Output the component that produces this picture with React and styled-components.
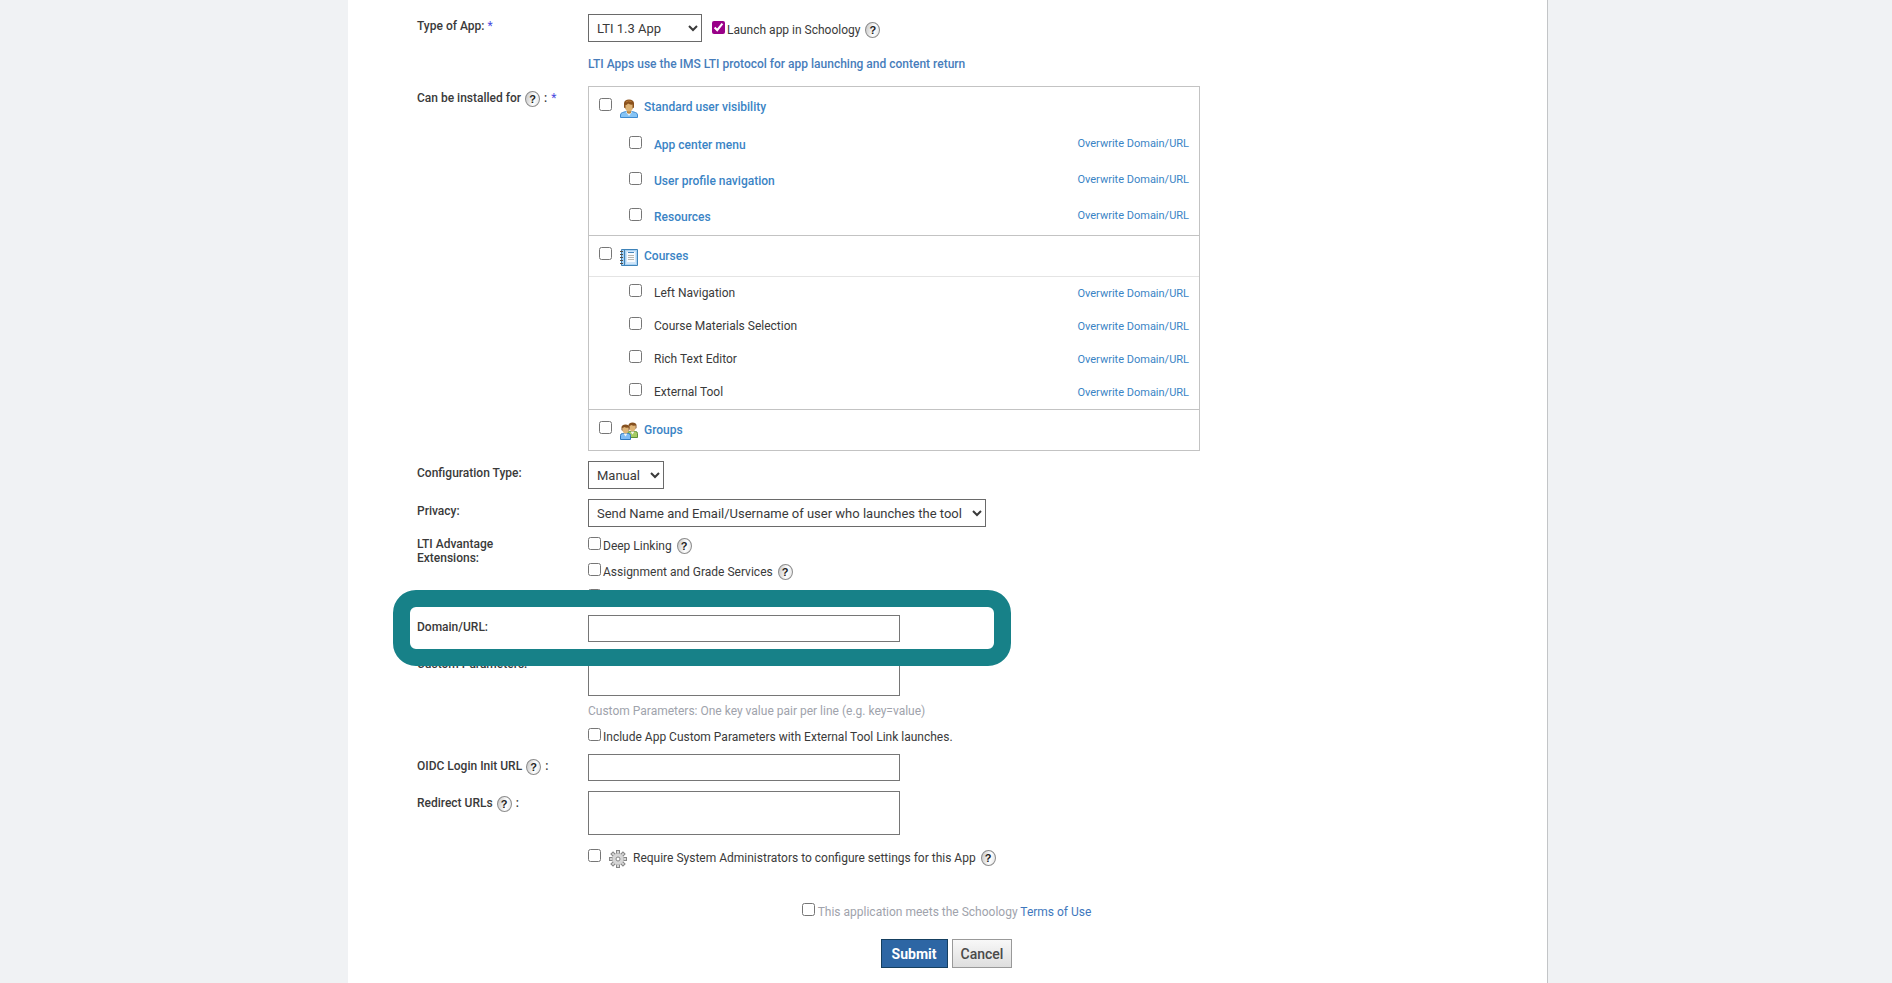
import React from "react";
import styled, { createGlobalStyle } from "styled-components";

const GlobalStyle = createGlobalStyle`
  * { box-sizing: border-box; }
  body {
    margin: 0;
    background: #f0f2f4;
    color: #3a3a3a;
    font: 12px/14px Roboto, "Liberation Sans", sans-serif;
  }
  input, select, textarea, button { font-family: inherit; color: inherit; }
`;

const Page = styled.div`
  display: flex;
  justify-content: center;
  padding-left: 4px;
  min-height: 100vh;
`;

const Main = styled.main`
  flex: 0 1 1200px;
  background: #fff;
  border-right: 1px solid #c3c5c7;
  padding: 14px 0 15px;
`;

const FormRows = styled.div`
  display: grid;
  gap: 10px;
  padding-left: 69px;
`;

const Row = styled.div`
  display: grid;
  grid-template-columns: 171px minmax(0, 1fr);
  align-items: start;
  position: relative;
`;

const RequireRow = styled(Row)`
  padding-top: 4px;
`;

const Label = styled.label`
  font-weight: 500;
  padding: ${(p) => (p.$top ? "0" : "5px")} 60px 0 0;
`;

const HelpLabel = styled.div`
  display: flex;
  align-items: center;
  gap: 4px;
  height: 24px;
  font-weight: 500;
`;

const Required = styled.span`
  color: #4b4be0;
  font-weight: 400;
`;

const Field = styled.div`
  min-width: 0;
`;

const Line = styled.div`
  display: flex;
  align-items: flex-start;
  height: ${(p) => p.$height || 26}px;
`;

const Launch = styled.div`
  display: flex;
  padding: 7px 0 0 10px;
`;

const Check = styled.input.attrs({ type: "checkbox" })`
  width: 13px;
  height: 13px;
  margin: 0;
  flex: none;
  accent-color: #908;
`;

const CheckLabel = styled.label`
  line-height: 18px;
  padding-left: 2px;
`;

const HelpButton = styled.button`
  width: 15px;
  height: 16px;
  flex: none;
  padding: 0;
  margin: 1px 0 0 ${(p) => p.$gap || 0}px;
  border: 1px solid #8c8c8c;
  border-radius: 50%;
  background: linear-gradient(100deg, #c8c8c8, #fff 60%, #e4e4e4);
  color: #222;
  font: bold 11px/14px "Liberation Sans", sans-serif;
  text-align: center;
`;

const Select = styled.select`
  width: ${(p) => p.$width}px;
  height: 28px;
  padding: 0 4px;
  border: 1px solid #6a6a6a;
  border-radius: 0;
  background: #fff;
  font-size: 13px;
`;

const TextBox = styled.input.attrs({ type: "text" })`
  width: 312px;
  height: 27px;
  border: 1px solid #767676;
  padding: 4px;
`;

const TextArea = styled.textarea`
  display: block;
  width: 312px;
  height: 44px;
  border: 1px solid #767676;
  padding: 4px;
  resize: none;
`;

const Note = styled.p`
  margin: 15px 0 5px;
  color: #477dbb;
  font-weight: 500;
`;

const Hint = styled.p`
  margin: 8px 0 10px;
  color: #a0a3ac;
`;

const Scope = styled.div`
  width: 612px;
  border: 1px solid #c3c3c3;
`;

const ScopeGroup = styled.section`
  border-top: ${(p) => (p.$first ? "0" : "1px solid #c3c3c3")};
`;

const ScopeHead = styled.div`
  display: flex;
  height: ${(p) => (p.$lined ? 41 : 40)}px;
  padding: 11px 0 0 10px;
  border-bottom: ${(p) => (p.$lined ? "1px solid #e4e4e4" : "0")};
  svg { margin: 1px 6px 0 8px; flex: none; }
  label { color: #3a84c5; font-weight: 500; line-height: 18px; }
`;

const ScopeList = styled.ul`
  list-style: none;
  margin: 0;
  padding: 0;
`;

const ScopeItem = styled.li`
  display: flex;
  height: ${(p) => (p.$strong ? 36 : 33)}px;
  padding: ${(p) => (p.$strong ? 9 : 7)}px 10px 0 40px;
  label {
    flex: 1;
    padding-left: 12px;
    line-height: 18px;
    color: ${(p) => (p.$strong ? "#3a84c5" : "inherit")};
    font-weight: ${(p) => (p.$strong ? 500 : 400)};
  }
  a { line-height: ${(p) => (p.$strong ? 16 : 20)}px; }
`;

const Overwrite = styled.a`
  color: #3a84c5;
  font-size: 11px;
  text-decoration: none;
`;

const Highlight = styled.div`
  position: absolute;
  top: -25px;
  left: -24px;
  width: 618px;
  height: 76px;
  border: 17px solid #178188;
  border-radius: 23px;
  z-index: 1;
  pointer-events: none;
`;

const Footer = styled.footer`
  display: flex;
  flex-direction: column;
  align-items: center;
  padding: 28px 2px 0 0;
`;

const Terms = styled(Line)`
  height: 36px;
  label { color: #a0a3ac; padding-left: 3px; }
  a { color: #3f78bd; text-decoration: none; }
`;

const Actions = styled.div`
  display: flex;
  gap: 4px;
`;

const Button = styled.button`
  height: 29px;
  padding: 0 ${(p) => (p.$primary ? 10 : 8)}px;
  border: 1px solid ${(p) => (p.$primary ? "#153f60" : "#999")};
  background: ${(p) => (p.$primary ? "#2d66a4" : "linear-gradient(#f8f8f8, #dedede)")};
  color: ${(p) => (p.$primary ? "#fff" : "#4a4a4a")};
  font-size: 14px;
  font-weight: ${(p) => (p.$primary ? 700 : 500)};
`;

const UserIcon = () => (
  <svg width="18" height="19" viewBox="0 0 18 19" aria-hidden="true">
    <path d="M.5 18.5V16q0-2 2-2.500L6 12.500h6l3.500 1q2 .5 2 2.500v2.500z" fill="#86c4f5" stroke="#3f8bd0" />
    <path d="M5.500 12.500h7L9 17z" fill="#eef5fa" />
    <path d="M7 10h4v4q-2 1.500-4 0z" fill="#b98742" />
    <path d="M5 4h8v5q-1 3.500-4 3.500T5 9z" fill="#ddb274" />
    <path d="M4 8.500V4Q4.500.5 9 .5T14 4v4.500l-1.500 1V5.500Q10 6 8 4.500 7 6 5.500 6v3.500z" fill="#8a511c" />
    <path d="M6 3Q8 1 11.500 2.500" stroke="#b87b3a" fill="none" />
  </svg>
);

const SmallPerson = ({ shirt, edge }) => (
  <>
    <path d="M.5 15.500v-4q0-2 2-2h6q2 0 2 2v4z" fill={shirt} stroke={edge} />
    <path d="M3.500 9.500h4l-2 3z" fill="#f4f6f2" />
    <path d="M2.500 3h6v4q-1 2.500-3 2.500T2.500 7z" fill="#dfb577" />
    <path d="M1.500 6V3Q2 .5 5.500.5T9.500 3v3l-1 1V3.500q-3 .5-4-.5l-2 1V7z" fill="#85501f" />
  </>
);

const GroupIcon = () => (
  <svg width="18" height="18" viewBox="0 0 18 18" aria-hidden="true">
    <g transform="translate(7 0)"><SmallPerson shirt="#a5cb63" edge="#5f8f3a" /></g>
    <g transform="translate(0 2)"><SmallPerson shirt="#7fbcf5" edge="#3078bd" /></g>
  </svg>
);

const CourseIcon = () => (
  <svg width="18" height="18" viewBox="0 0 18 18" aria-hidden="true">
    <path d="M1.500 1.500h16v16h-16z" fill="#a9d2f3" stroke="#3f83b9" />
    <path d="M4.500 2v15" stroke="#3f83b9" />
    <path d="M6 3h10v13H6z" fill="#cfe5f9" />
    <path d="M7 4h8v10H7z" fill="#f8fbfe" />
    <path d="M8 4.500h6" stroke="#4486bd" />
    <path d="M8 7.500h6M8 9.500h6M8 11.500h6" stroke="#b8b6b0" />
    <path d="M0 3.500h3M0 6.500h3M0 9.500h3M0 12.500h3M0 15.500h3" stroke="#54504a" />
  </svg>
);

const Cog = styled.svg`
  flex: none;
  margin: 1px 4px 0 8px;
`;

const GearIcon = () => (
  <Cog width="18" height="18" viewBox="0 0 18 18" aria-hidden="true">
    <g fill="#d6d6d6" stroke="#858585">
      {[0, 45, 90, 135].map((a) => (
        <rect key={a} x="7.500" y=".5" width="3" height="17" transform={`rotate(${a} 9 9)`} />
      ))}
      <circle cx="9" cy="9" r="5.500" stroke="#aaa" />
    </g>
    <circle cx="9" cy="9" r="5.500" fill="#d6d6d6" />
    <circle cx="9" cy="9" r="2" fill="#fff" stroke="#858585" />
  </Cog>
);

const Help = ({ gap }) => (
  <HelpButton type="button" aria-label="Help" $gap={gap}>?</HelpButton>
);

const groups = [
  { id: "user", title: "Standard user visibility", Icon: UserIcon, strong: true,
    items: ["App center menu", "User profile navigation", "Resources"] },
  { id: "course", title: "Courses", Icon: CourseIcon, lined: true,
    items: ["Left Navigation", "Course Materials Selection", "Rich Text Editor", "External Tool"] },
  { id: "group", title: "Groups", Icon: GroupIcon, items: [] },
];

export default function App() {
  return (
    <Page>
      <GlobalStyle />
      <Main>
        <form onSubmit={(e) => e.preventDefault()}>
          <FormRows>
            <Row>
              <Label htmlFor="type">Type of App: <Required>*</Required></Label>
              <Field>
                <Line $height={28}>
                  <Select id="type" $width={114}><option>LTI 1.3 App</option></Select>
                  <Launch>
                    <Check id="launch" defaultChecked />
                    <CheckLabel htmlFor="launch">Launch app in Schoology</CheckLabel>
                    <Help gap={5} />
                  </Launch>
                </Line>
                <Note>LTI Apps use the IMS LTI protocol for app launching and content return</Note>
              </Field>
            </Row>
            <Row>
              <HelpLabel>Can be installed for <Help /> : <Required>*</Required></HelpLabel>
              <Scope>
                {groups.map(({ id, title, Icon, strong, lined, items }, n) => (
                  <ScopeGroup key={id} $first={n === 0}>
                    <ScopeHead $lined={lined}>
                      <Check id={id} />
                      <Icon />
                      <label htmlFor={id}>{title}</label>
                    </ScopeHead>
                    {items.length > 0 && (
                      <ScopeList>
                        {items.map((item, i) => (
                          <ScopeItem key={item} $strong={strong}>
                            <Check id={id + i} />
                            <label htmlFor={id + i}>{item}</label>
                            <Overwrite href="#overwrite">Overwrite Domain/URL</Overwrite>
                          </ScopeItem>
                        ))}
                      </ScopeList>
                    )}
                  </ScopeGroup>
                ))}
              </Scope>
            </Row>
            <Row>
              <Label htmlFor="config">Configuration Type:</Label>
              <Select id="config" $width={76}><option>Manual</option></Select>
            </Row>
            <Row>
              <Label htmlFor="privacy">Privacy:</Label>
              <Select id="privacy" $width={398}>
                <option>Send Name and Email/Username of user who launches the tool</option>
              </Select>
            </Row>
            <Row>
              <Label as="div" $top>LTI Advantage Extensions:</Label>
              <Field>
                <Line>
                  <Check id="deep" />
                  <CheckLabel htmlFor="deep">Deep Linking</CheckLabel>
                  <Help gap={5} />
                </Line>
                <Line>
                  <Check id="grade" />
                  <CheckLabel htmlFor="grade">Assignment and Grade Services</CheckLabel>
                  <Help gap={5} />
                </Line>
                <Line $height={16}>
                  <Check aria-label="Extension" />
                </Line>
              </Field>
            </Row>
            <Row>
              <Label htmlFor="domain">Domain/URL:</Label>
              <TextBox id="domain" />
              <Highlight />
            </Row>
            <Row>
              <Label htmlFor="params">Custom Parameters:</Label>
              <Field>
                <TextArea id="params" />
                <Hint>Custom Parameters: One key value pair per line (e.g. key=value)</Hint>
                <Line $height={16}>
                  <Check id="include" />
                  <CheckLabel htmlFor="include">
                    Include App Custom Parameters with External Tool Link launches.
                  </CheckLabel>
                </Line>
              </Field>
            </Row>
            <Row>
              <HelpLabel><label htmlFor="oidc">OIDC Login Init URL</label> <Help /> :</HelpLabel>
              <TextBox id="oidc" />
            </Row>
            <Row>
              <HelpLabel><label htmlFor="redirect">Redirect URLs</label> <Help /> :</HelpLabel>
              <TextArea id="redirect" />
            </Row>
            <RequireRow>
              <span />
              <Line>
                <Check id="require" />
                <GearIcon />
                <CheckLabel htmlFor="require">
                  Require System Administrators to configure settings for this App
                </CheckLabel>
                <Help gap={5} />
              </Line>
            </RequireRow>
          </FormRows>
          <Footer>
            <Terms>
              <Check id="terms" />
              <CheckLabel htmlFor="terms">
                This application meets the Schoology <a href="#terms-of-use">Terms of Use</a>
              </CheckLabel>
            </Terms>
            <Actions>
              <Button type="submit" $primary>Submit</Button>
              <Button type="button">Cancel</Button>
            </Actions>
          </Footer>
        </form>
      </Main>
    </Page>
  );
}
